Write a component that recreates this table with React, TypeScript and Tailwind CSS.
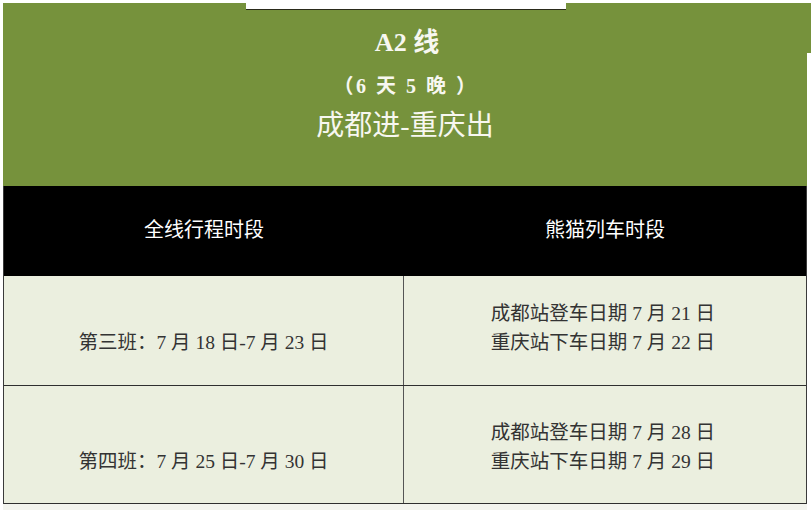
import React from 'react';

const FONT = "font-['Liberation_Serif','Noto_Sans_CJK_SC',serif]";

const ROWS = [
  {
    shift: '第三班：7 月 18 日-7 月 23 日',
    train: ['成都站登车日期 7 月 21 日', '重庆站下车日期 7 月 22 日'],
    height: 'h-[110px]',
    pad: 'pb-[5px]',
  },
  {
    shift: '第四班：7 月 25 日-7 月 30 日',
    train: ['成都站登车日期 7 月 28 日', '重庆站下车日期 7 月 29 日'],
    height: 'h-[118px]',
    pad: 'pt-[4px]',
  },
];

export default function App() {
  return (
    <div className={`relative w-[811px] h-[515px] bg-white overflow-hidden ${FONT}`}>
      {/* white notch at the top */}
      <div className="absolute left-[246px] top-0 w-[320px] h-[10px] bg-white border-b border-[#2a2a1a] z-10" />
      {/* green bleeds to the right edge at the top */}
      <div className="absolute right-0 top-[3px] w-[5px] h-[50px] bg-[#76923c]" />

      <div className="ml-[3px] mr-[4px] pt-[3px]">
        {/* title block */}
        <div className="h-[183px] bg-[#76923c] text-[#f7f7f0] flex flex-col items-center pt-[22px]">
          <div className="text-[26px] font-bold leading-[36px] ml-[4px]">A2 线</div>
          <div className="text-[20px] font-bold leading-[30px] mt-[10px] tracking-[2.5px] ml-[2px]">（6 天 5 晚 ）</div>
          <div className="text-[28px] leading-[40px] mt-[5px]">成都进-重庆出</div>
        </div>

        {/* table */}
        <div className="border-l border-r border-[#3a3a3a]">
          <div className="grid grid-cols-[400px_1fr] h-[90px] bg-black text-white text-[20px]">
            <div className="flex items-center justify-center pb-[2px]">全线行程时段</div>
            <div className="flex items-center justify-center pb-[2px]">熊猫列车时段</div>
          </div>

          {ROWS.map((row, i) => (
            <div
              key={i}
              className={`grid grid-cols-[400px_1fr] ${row.height} bg-[#ebefdf] text-[#333333] text-[19.5px] leading-[29px] border-b border-[#2f2f2f]`}
            >
              <div className={`flex flex-col items-center justify-center border-r border-[#555555] ${row.pad}`}>
                <div>&nbsp;</div>
                <div>{row.shift}</div>
              </div>
              <div className={`flex flex-col items-center justify-center pr-[4px] ${row.pad}`}>
                {row.train.map((t) => (
                  <div key={t}>{t}</div>
                ))}
              </div>
            </div>
          ))}
        </div>
        <div className="h-[6px] bg-[#f3f4ee]" />
      </div>
    </div>
  );
}
